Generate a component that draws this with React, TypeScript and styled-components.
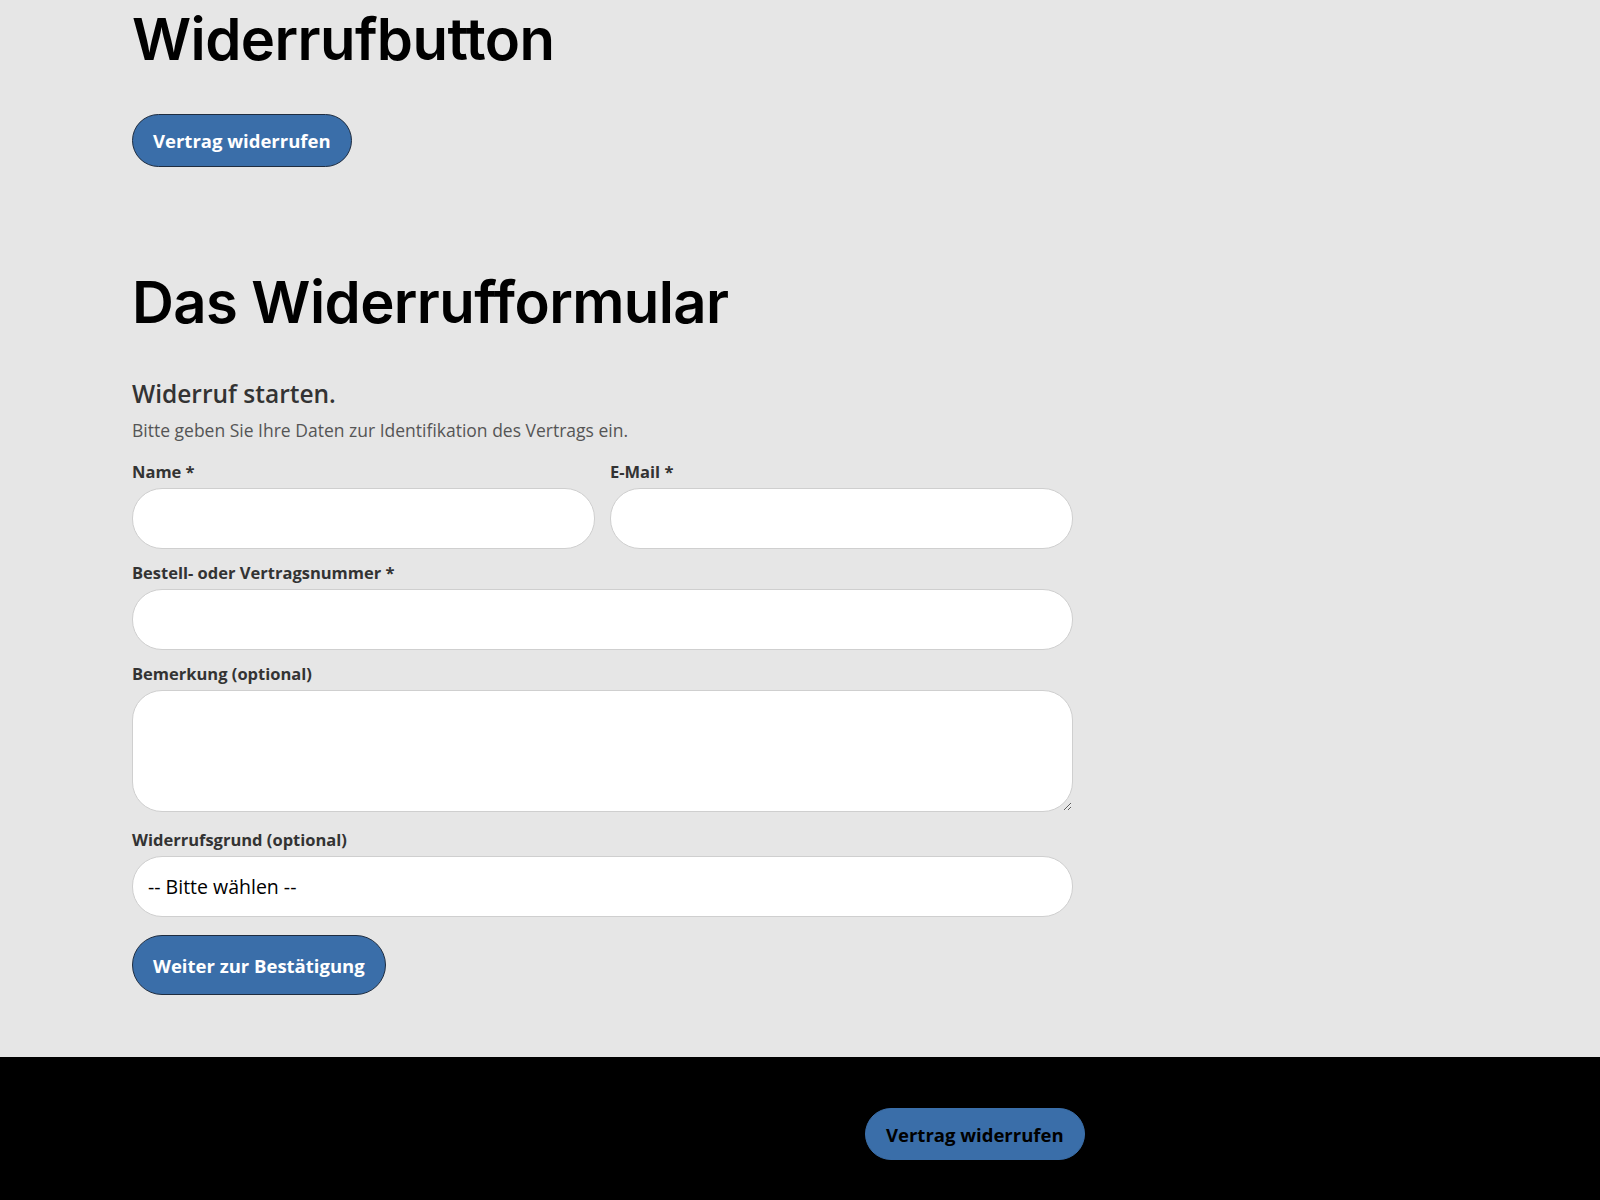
import React from "react";
import styled, { createGlobalStyle } from "styled-components";

const GlobalStyle = createGlobalStyle`
  html, body {
    margin: 0;
    padding: 0;
    background: #e6e6e6;
  }
  body {
    font-family: "Open Sans", "Noto Sans", sans-serif;
    color: #333;
  }
  * { box-sizing: border-box; }
`;

const Page = styled.div`
  display: flex;
  flex-direction: column;
  min-height: 1200px;
`;

const Main = styled.main`
  background: #e6e6e6;
  padding: 0 0 62px 132px;
`;

const Section = styled.section<{ $gap?: number }>`
  display: flex;
  flex-direction: column;
  align-items: flex-start;
  margin-top: ${(p) => p.$gap ?? 0}px;
`;

const Heading = styled.h1`
  font-family: Inter, "Liberation Sans", sans-serif;
  font-weight: 600;
  font-size: 58px;
  letter-spacing: -0.01em;
  line-height: 78px;
  margin: 0;
  color: #000;
`;

const Spacer = styled.div<{ $h: number }>`
  height: ${(p) => p.$h}px;
`;

const Button = styled.button<{ $dark?: boolean; $h?: number }>`
  font-family: "Open Sans", "Noto Sans", sans-serif;
  font-weight: 700;
  font-size: 18.5px;
  height: ${(p) => p.$h ?? 53}px;
  padding: 0 20px;
  border-radius: 30px;
  background: #3a6ea9;
  color: ${(p) => (p.$dark ? "#000" : "#fff")};
  border: 1px solid ${(p) => (p.$dark ? "#3a6ea9" : "#1f2d40")};
  cursor: pointer;
`;

const Form = styled.form`
  width: 941px;
  display: flex;
  flex-direction: column;
`;

const Title = styled.h2`
  font-family: "Open Sans", "Noto Sans", sans-serif;
  font-weight: 600;
  font-size: 24.5px;
  line-height: 34px;
  margin: 36px 0 7px;
  color: #333;
`;

const Sub = styled.p`
  font-size: 17.5px;
  line-height: 24px;
  margin: 0 0 18px;
  color: #555;
`;

const Row = styled.div`
  display: grid;
  grid-template-columns: 1fr 1fr;
  gap: 15px;
`;

const Field = styled.div<{ $mb?: number }>`
  display: flex;
  flex-direction: column;
  margin-bottom: ${(p) => p.$mb ?? 12}px;
`;

const Label = styled.label`
  font-weight: 700;
  font-size: 16.5px;
  line-height: 24px;
  color: #333;
  margin-bottom: 4px;
`;

const Input = styled.input`
  height: 61px;
  width: 100%;
  border: 1px solid #cfcfcf;
  border-radius: 30px;
  background: #fff;
  padding: 0 16px;
  font-size: 19px;
  font-family: inherit;
`;

const TextArea = styled.textarea`
  height: 122px;
  width: 100%;
  border: 1px solid #cfcfcf;
  border-radius: 30px;
  background: #fff;
  padding: 14px 16px;
  font-size: 19px;
  font-family: inherit;
  resize: vertical;
  display: block;
`;

const Select = styled.select`
  height: 61px;
  width: 100%;
  border: 1px solid #cfcfcf;
  border-radius: 30px;
  background: #fff;
  padding: 0 15px;
  font-size: 19.5px;
  font-family: "Open Sans", "Noto Sans", sans-serif;
  color: #000;
  appearance: none;
`;

const Actions = styled.div`
  margin-top: 6px;
`;

const Footer = styled.footer`
  background: #000;
  flex: 1;
  padding: 51px 0 0 865px;
`;

export default function App() {
  return (
    <Page>
      <GlobalStyle />
      <Main>
        <Section>
          <Heading>Widerrufbutton</Heading>
          <Spacer $h={36} />
          <Button type="button">Vertrag widerrufen</Button>
        </Section>
        <Section $gap={96}>
          <Heading>Das Widerrufformular</Heading>
          <Form onSubmit={(e) => e.preventDefault()}>
            <Title>Widerruf starten.</Title>
            <Sub>Bitte geben Sie Ihre Daten zur Identifikation des Vertrags ein.</Sub>
            <Row>
              <Field>
                <Label>Name *</Label>
                <Input type="text" />
              </Field>
              <Field>
                <Label>E-Mail *</Label>
                <Input type="email" />
              </Field>
            </Row>
            <Field>
              <Label>Bestell- oder Vertragsnummer *</Label>
              <Input type="text" />
            </Field>
            <Field $mb={16}>
              <Label>Bemerkung (optional)</Label>
              <TextArea />
            </Field>
            <Field>
              <Label>Widerrufsgrund (optional)</Label>
              <Select defaultValue="">
                <option value="">-- Bitte wählen --</option>
              </Select>
            </Field>
            <Actions>
              <Button type="submit" $h={60}>Weiter zur Bestätigung</Button>
            </Actions>
          </Form>
        </Section>
      </Main>
      <Footer>
        <Button type="button" $dark $h={52}>Vertrag widerrufen</Button>
      </Footer>
    </Page>
  );
}
